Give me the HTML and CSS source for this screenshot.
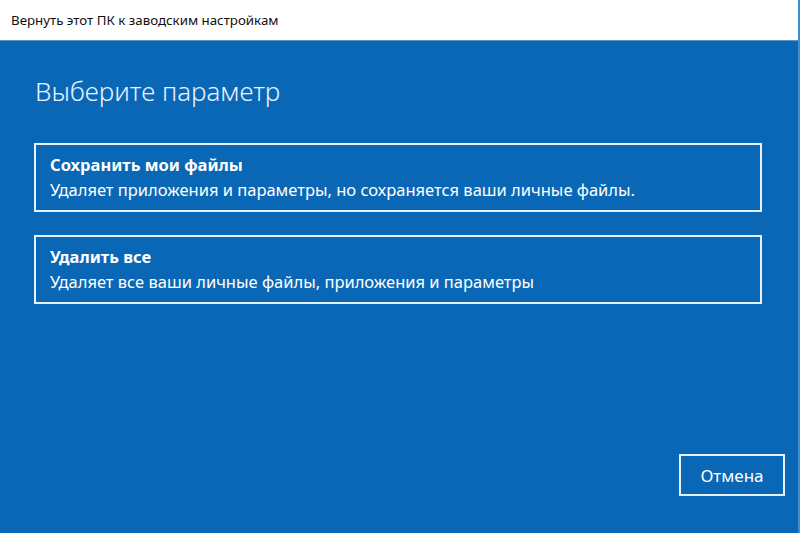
FILE: index.html
```html
<!DOCTYPE html>
<html lang="ru">
<head>
  <meta charset="UTF-8" />
  <title>Вернуть этот ПК к заводским настройкам</title>
  <link rel="stylesheet" href="styles.css">
</head>
<body>
  <div class="window">
    <div class="titlebar">Вернуть этот ПК к заводским настройкам</div>

    <div class="main">
      <h1>Выберите параметр</h1>

      <div class="options">
        <div class="option">
          <div class="option-title">Сохранить мои файлы</div>
          <div class="option-desc">Удаляет приложения и параметры, но сохраняется ваши личные файлы.</div>
        </div>
        <div class="option">
          <div class="option-title">Удалить все</div>
          <div class="option-desc">Удаляет все ваши личные файлы, приложения и параметры</div>
        </div>
      </div>

      <div class="footer">
        <button class="btn">Отмена</button>
      </div>
    </div>
  </div>
</body>
</html>
```

FILE: styles.css
```css
* { box-sizing: border-box; margin: 0; padding: 0; }
html, body {
  width: 100%; height: 100%;
  background: #0a67b5; font-family: 'Noto Sans', 'Open Sans', sans-serif; color: #fff;
}

.window {
  display: flex; flex-direction: column; height: 100%;
  border-right: 2px solid #3f8dcc;
}

/* Заголовок окна */
.titlebar {
  height: 41px; padding: 0 11px; display: flex; align-items: center;
  background: #fff; color: #111; font-size: 13.3px;
  border-bottom: 1px solid #5d95c4;
}

/* Контент */
.main {
  flex: 1; display: flex; flex-direction: column;
  padding: 32px 36px 34px 34px;
}
.main h1 {
  font-size: 26px; font-weight: 300; line-height: 36px;
  margin-left: 1px; margin-bottom: 34px; color: #e8f3ff;
}

.options { display: flex; flex-direction: column; gap: 23px; }
.option {
  border: 2px solid #e6f2ff; padding: 8px 14px 8px 14px;
  height: 69px; cursor: pointer;
}
.option-title { font-size: 16.5px; font-weight: 700; line-height: 24px; }
.option-desc { font-size: 16.5px; line-height: 26px; }

.footer { margin-top: auto; display: flex; justify-content: flex-end; margin-right: -23px; margin-bottom: 3px; }
.btn {
  width: 106px; height: 42px; background: transparent; color: #fff;
  border: 2px solid #e6f2ff; font-family: inherit; font-size: 17px; cursor: pointer;
}
```
